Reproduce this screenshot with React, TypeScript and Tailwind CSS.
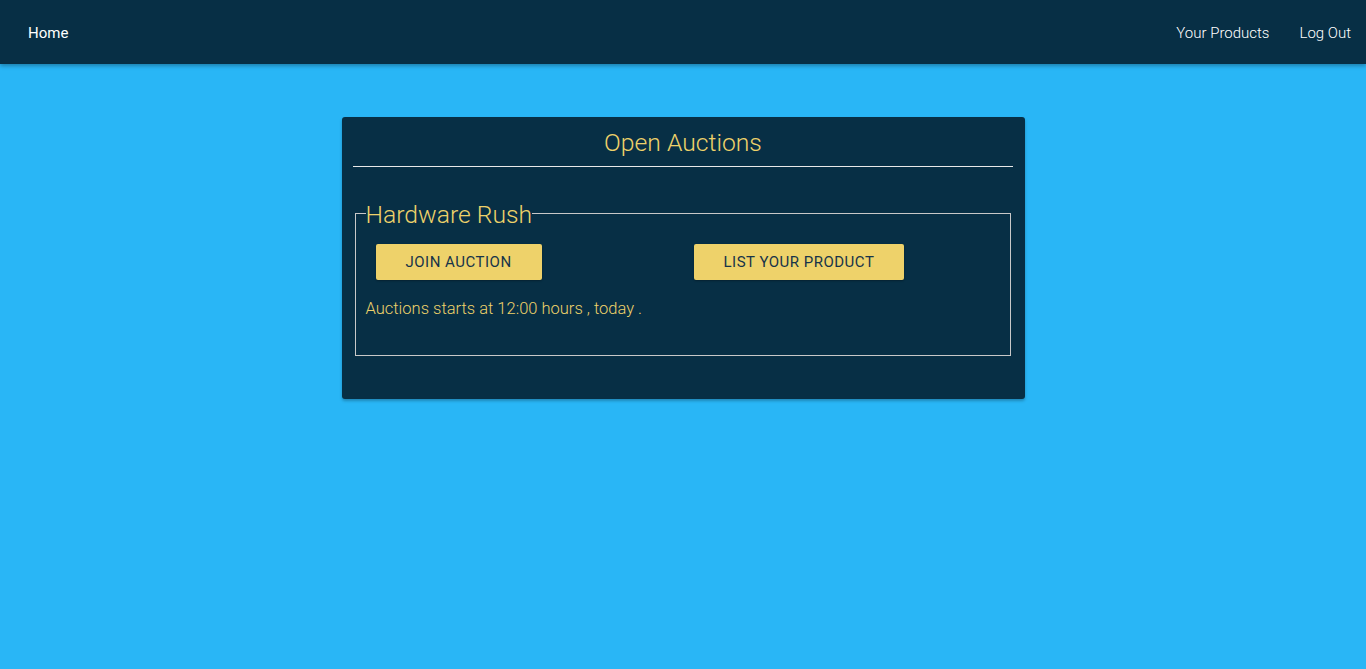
const App = () => {
  return (
    <div className="min-h-screen bg-[#29b6f6] font-['Roboto',sans-serif]">
      <nav className="h-16 pt-[2px] bg-[#072f45] shadow-[0_2px_4px_rgba(0,0,0,0.3)] flex items-center justify-between">
        <a className="pl-7 text-[15px] text-white">Home</a>
        <ul className="flex items-center">
          <li>
            <a className="px-[15px] text-[15px] font-light text-white">Your Products</a>
          </li>
          <li>
            <a className="px-[15px] text-[15px] font-light text-white">Log Out</a>
          </li>
        </ul>
      </nav>

      <div className="w-[683px] mx-auto mt-[53px] bg-[#072f45] rounded-[3px] shadow-[0_2px_3px_rgba(0,0,0,0.25)] pt-[10px] pb-[43px]">
        <h2 className="text-center text-[24.7px] leading-8 font-light text-[#eed26a]">Open Auctions</h2>
        <hr className="ml-[11px] mr-3 mt-[7px] border-0 border-t border-[#e8e8e8]" />

        <fieldset className="ml-[13px] mr-[14px] mt-[29px] border border-[#c8c8c8] px-[10px] pb-[34px] pt-0">
          <legend className="p-0 pt-1 text-[24.7px] leading-[30px] font-light text-[#eed26a]">Hardware Rush</legend>
          <div className="grid grid-cols-2 mt-[14px]">
            <div className="pl-[10px]">
              <button className="h-9 px-[30px] bg-[#eed26a] rounded-[2px] text-[15px] tracking-[0.5px] text-[#173449] shadow-[0_1px_2px_rgba(0,0,0,0.3)]">
                JOIN AUCTION
              </button>
            </div>
            <div className="pl-[11px]">
              <button className="h-9 px-[30px] bg-[#eed26a] rounded-[2px] text-[15px] tracking-[0.5px] text-[#173449] shadow-[0_1px_2px_rgba(0,0,0,0.3)]">
                LIST YOUR PRODUCT
              </button>
            </div>
          </div>
          <p className="mt-[17px] text-[16.5px] leading-6 font-light text-[#eed26a]">Auctions starts at 12:00 hours , today .</p>
        </fieldset>
      </div>
    </div>
  );
};

export default App;
